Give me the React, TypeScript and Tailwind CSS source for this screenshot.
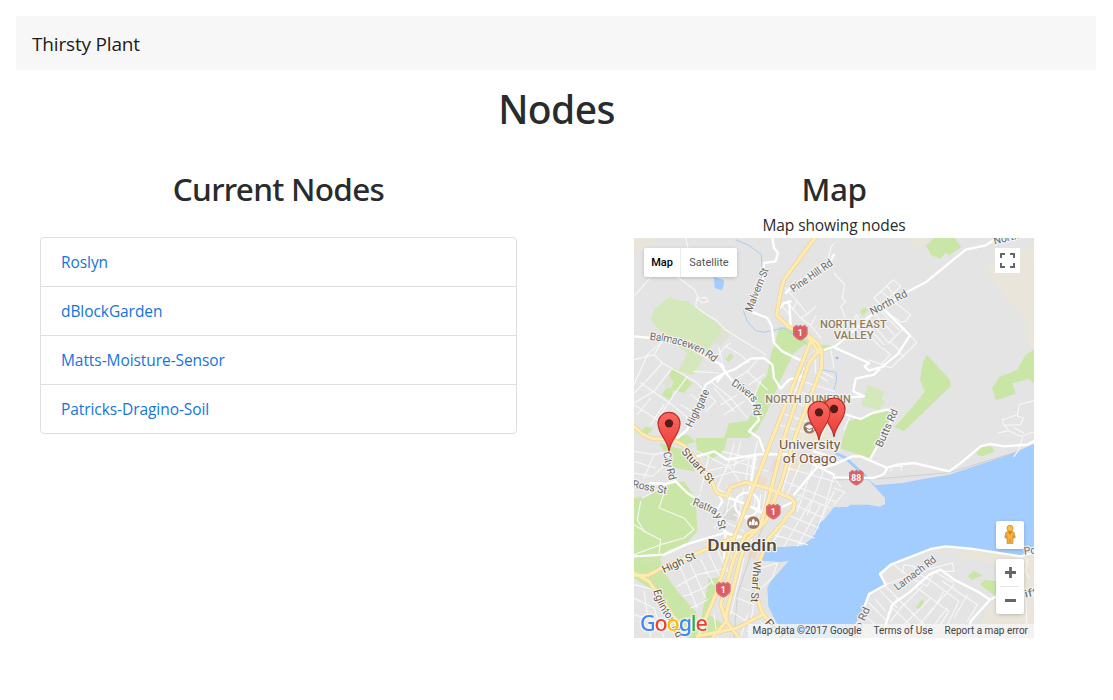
import React from "react";

const nodes = ["Roslyn", "dBlockGarden", "Matts-Moisture-Sensor", "Patricks-Dragino-Soil"];

const palePark = [
  "M50,240 L62,212 L110,174 L118,184 L160,190 L270,272 L238,315 L212,355 L178,412 L132,398 L160,345 L110,308 L62,262 Z",
  "M700,440 L751,461 L743,482 L755,492 L735,517 L682,503 Z",
];
const brightParks = [
  "M118,388 L175,435 L150,465 L118,455 L110,488 L84,470 L96,452 L112,448 L118,430 L104,415 Z",
  "M290,345 L298,356 L284,372 L274,364 Z",
  "M436,265 L470,272 L525,310 L480,345 L440,425 L400,520 L370,575 L345,600 L270,600 L285,556 L340,548 L368,505 L366,450 L400,410 L410,350 L425,310 Z",
  "M545,320 L590,322 L598,335 L560,345 Z",
  "M502,396 L518,400 L512,412 L500,405 Z",
  "M35,565 L58,572 L40,590 L20,582 Z",
  "M900,0 L962,0 L982,27 L945,52 L935,45 L918,62 L890,50 L886,38 L875,24 Z",
  "M690,208 L702,215 L688,234 L678,222 Z",
  "M878,350 L948,425 L951,444 L810,579 L780,568 L825,520 L872,462 L858,425 L868,368 Z",
  "M1200,335 L1200,438 L1185,422 L1135,436 L1145,468 L1085,487 L1074,450 L1095,418 L1150,395 L1175,350 Z",
  "M645,550 L740,518 L768,514 L783,528 L758,576 L713,662 L620,632 L626,600 Z",
  "M1028,642 L1045,622 L1075,626 L1080,642 L1045,655 L1030,652 Z",
  "M185,600 L280,600 L270,640 L230,665 L190,645 Z",
  "M95,600 L160,590 L185,612 L140,625 Z",
  "M0,780 L40,775 L100,740 L150,730 L185,780 L190,880 L150,925 L105,935 L75,965 L0,975 Z",
  "M75,615 L150,635 L185,665 L180,700 L120,690 Z",
  "M0,975 L80,965 L95,1010 L130,1060 L185,1120 L205,1200 L130,1200 L95,1130 L60,1060 L0,1020 Z",
  "M225,1020 L262,1020 L225,1130 L270,1160 L235,1200 L190,1200 Z",
  "M338,887 L360,880 L350,910 L325,910 Z",
  "M1000,1015 L1020,998 L1045,1012 L1015,1026 Z",
  "M1038,1040 L1050,1026 L1090,1030 L1090,1078 Z",
  "M865,1083 L870,1092 L858,1115 L845,1108 Z",
];
const sand = [
  "M0,0 L70,0 L35,30 L0,42 Z",
  "M815,0 L880,0 L880,12 L850,32 Z",
  "M1052,98 L1082,68 L1130,105 L1158,100 L1158,45 L1200,15 L1200,330 L1175,310 L1185,290 L1175,270 L1182,250 Z",
  "M965,938 L1160,958 L1200,950 L1200,1200 L1020,1200 L1068,1100 L1140,1050 L1085,980 L970,955 Z",
];
const buildings = [
  { d: "M420,660 L442,670 L430,708 L408,700 Z", fill: "#ecd9dd" },
  { d: "M375,712 L402,720 L388,750 L366,742 Z", fill: "#ecdccb" },
  { d: "M475,640 L525,650 L490,710 L460,700 Z", fill: "#ebe3cd" },
  { d: "M515,470 L560,480 L590,600 L520,640 L490,600 Z", fill: "#ebe6d8" },
  { d: "M350,930 L372,935 L366,965 L340,960 Z", fill: "#ecd8c4" },
  { d: "M275,805 L320,810 L305,850 L262,840 Z", fill: "#dcdad7" },
  { d: "M84,435 L104,418 L115,430 L100,450 Z", fill: "#e2dfd3" },
  { d: "M270,272 L292,282 L262,322 L238,315 Z", fill: "#e2dfd3" },
];

const water =
  "M1200,618 L1150,640 L1080,665 L945,710 L870,722 L805,735 L725,742 L700,722 L753,780 L753,798 L738,806 L704,800 L650,800 L640,807 L600,808 L570,845 L550,858 L535,900 L505,923 L392,930 L385,968 L440,972 L465,968 L410,1030 L400,1050 L403,1105 L428,1155 L455,1200 L640,1200 L690,1110 L705,1068 L755,1040 L738,1008 L770,980 L890,933 L935,925 L1010,932 L1160,955 L1200,945 Z";

const thinStreets =
  "M155,0 L162,30 M0,175 L50,118 M130,117 L182,155 L192,180 L215,178 L222,190 L205,195 L188,182 L185,205 L210,225 L245,245 L270,272 L310,298 L395,350 " +
  "M85,310 L40,350 L0,440 M0,365 L60,350 L85,375 L185,432 L245,490 L215,520 M60,350 L85,310 M85,375 L45,420 L0,465 M110,395 L60,460 L0,495 M160,415 L120,470 L70,545 M20,435 L120,505 L180,555 M0,500 L70,545 L110,590 M50,480 L10,530 M90,500 L50,560 M170,470 L210,500 M140,500 L190,530 " +
  "M255,405 L180,400 M230,430 L290,480 L340,540 M245,360 L275,325 L320,350 L345,375 M275,325 L290,315 M295,430 L340,400 L400,455 M340,400 L370,365 M390,410 L345,440 M255,330 L265,370 M240,450 L300,520 M260,500 L310,470 M270,530 L330,490 M380,430 L362,470 " +
  "M455,150 L490,190 L520,228 L500,240 L470,205 M490,190 L475,215 M520,228 L545,205 M500,240 L530,262 L560,300 M530,262 L545,235 M445,205 L470,235 L465,262 M580,75 L590,30 L600,15 M540,315 L545,405 L580,430 M560,400 L600,420 M480,420 L520,435 L600,460 M470,450 L570,490 M455,485 L560,520 M440,525 L550,560 M432,560 L520,585 M510,390 L480,470 M590,330 L600,390 " +
  "M600,105 L632,140 L625,180 L635,190 L620,205 L634,240 M720,180 L780,240 L828,295 M720,180 L778,125 L800,145 L745,200 M740,160 L830,230 L815,250 L800,252 L770,230 M760,145 L795,190 M700,240 L765,315 L810,270 M690,255 L750,320 M720,225 L780,290 M735,215 L795,275 M680,265 L740,328 M828,290 L848,315 L770,390 L745,380 L705,365 M745,330 L770,350 L740,380 M765,310 L790,330 L805,355 M660,240 L668,230 L673,240 L660,255 M630,575 L650,530 " +
  "M1200,488 L1155,500 L1150,535 L1168,540 L1160,560 L1110,562 L1105,545 L1150,530 M1092,585 L1125,578 L1110,562 M1125,578 L1160,595 L1200,582 M1140,570 L1170,585 " +
  "M0,640 L60,650 L105,640 L95,680 L55,715 L0,705 M0,670 L65,690 M60,650 L30,720 M0,745 L50,735 M25,780 L80,750 L105,735 M20,790 L10,845 L30,880 L80,905 L75,945 M0,860 L40,885 M90,765 L75,810 L150,840 L180,875 L150,900 L80,920 L0,950 " +
  "M215,700 L300,680 L365,650 M235,720 L300,700 L350,710 M250,750 L290,660 M190,640 L290,690 L320,735 M225,650 L200,760 M300,620 L275,700 M320,610 L300,690 M345,660 L335,730 M290,665 L400,700 M265,640 L370,665 M370,610 L350,700 M200,770 L170,800 M230,740 L280,770 M365,770 L360,810 M320,780 L280,820 L240,870 M330,750 L310,860 M290,765 L275,830 M380,770 L370,870 M340,800 L420,830 M300,830 L390,860 M270,850 L330,880 M395,760 L380,860 " +
  "M480,640 L445,760 M510,650 L460,770 M545,660 L490,820 M575,680 L520,830 M600,710 L560,850 M600,760 L540,890 M460,690 L600,730 M450,730 L600,790 M490,770 L590,810 M480,800 L570,840 M460,830 L555,870 M440,860 L540,900 M420,890 L520,920 M500,770 L410,925 M530,790 L450,925 M560,800 L490,925 " +
  "M130,1045 L190,1010 L280,990 M150,1075 L210,1050 L235,1030 M170,1110 L220,1085 M140,990 L190,1110 M170,980 L215,1080 M200,965 L240,1040 M225,950 L260,1020 M250,935 L280,1000 M270,915 L300,970 M300,960 L280,1050 M330,960 L290,1130 M0,1080 L60,1110 L90,1200 M0,1130 L70,1150 M30,1060 L50,1200 M0,1040 L80,1060 " +
  "M380,990 L430,975 L415,1020 L370,1060 M310,1080 L360,1100 L350,1150 M290,1120 L370,1170 M325,1050 L350,1060 M240,1130 L250,1200 M340,1130 L320,1200 M380,1150 L410,1200 M340,1180 L420,1180 " +
  "M600,750 L632,762 L600,800 M600,720 L620,745 M770,700 L775,685 L805,685 L800,697 M780,980 L835,1025 L880,995 L955,975 L960,1000 L925,1000 M805,1005 L810,980 L840,985 L850,1005 L910,1040 M755,1040 L820,1015 L880,1045 L900,1000 L960,1035 M755,1045 L790,1080 L760,1130 M740,1060 L790,1110 M725,1085 L755,1120 M705,1095 L760,1150 M690,1130 L735,1170 M670,1160 L710,1200 M770,1105 L850,1180 M790,1080 L870,1160 M850,1050 L945,1120 L905,1180 M880,1020 L975,1090 L935,1170 M770,1150 L800,1110 L865,1045 M770,1200 L840,1130 L890,1080 M820,1200 L900,1110 L930,1060 M870,1200 L940,1110 M925,1030 L1030,1100 L1000,1150 M960,1040 L880,1130 M1000,1070 L960,1140 M1180,965 L1175,1000 L1185,1020 M1175,1050 L1180,1200 M1140,655 L1155,635 L1165,600";

const midStreets =
  "M415,0 L420,30 L432,45 L425,70 L390,75 L388,120 L350,220 L400,240 L412,262 L420,315 L445,340 L500,367 " +
  "M0,295 L50,300 L150,320 L240,370 L265,380 L275,405 L310,445 L360,500 L375,545 L345,580 L375,600 L390,640 " +
  "M130,600 L160,575 L215,440 L270,405 L300,395 L350,362 L390,360 L415,380 L420,420 L440,452 L465,425 L500,415 " +
  "M255,375 L280,410 M270,405 L250,430 M455,165 L475,145 L590,68 L600,50 M430,220 L450,195 L470,190 M465,190 L470,260 M560,340 L600,325 " +
  "M1090,0 L1055,22 L995,35 L875,133 L800,172 L700,240 L640,295 L600,328 M740,205 L828,292 L790,350 L745,385 L720,410 L665,422 L658,460 L690,475 L620,480 M600,328 L705,375 L692,385 L705,398 L750,385 " +
  "M630,528 L680,543 L715,525 L760,515 L783,525 L755,580 L710,660 M560,690 L600,680 L655,655 L680,655 L760,690 L750,708 L720,720 L600,718 M755,690 L790,680 L840,675 L945,700 L980,675 L1040,625 L1070,618 L1110,625 L1180,620 L1200,610 " +
  "M105,640 L108,690 L125,730 L160,765 L230,810 L260,835 L272,880 L310,900 M50,735 L95,738 L125,730 M190,655 L240,640 L280,665 L365,650 L400,648 L480,650 M365,650 L345,770 M0,955 L90,950 L155,920 L270,885 M275,885 L350,905 M245,765 L340,800 L410,840 M250,760 L265,790 L240,830 M480,790 L395,830 M555,680 L480,770 M530,675 L600,710 M270,960 L275,885 M540,640 L600,660 M555,607 L575,560 L595,500 " +
  "M690,1110 L705,1068 L755,1040 L738,1008 L770,980 L890,933 L935,925 L1010,932 L1160,955 L1200,943 M748,1200 L755,1160 L775,1100 L830,1060 L885,1010 L920,995 L960,1025 L1030,1060 L1068,1085 L1010,1150 L1000,1200 M1068,1085 L1120,1060 L1200,1070";

const highways =
  "M542,0 L450,125 L440,160 L428,232 L465,268 L520,290 L550,315 L564,340 L562,390 L482,600 L440,740 L395,850 L340,905 L320,960 L277,1125 L277,1150 " +
  "M530,310 L415,600 L298,905 L245,1070 L190,1200 M556,335 L525,375 L450,600 L405,780 L378,865 L335,890 L300,960 L260,1100 L277,1150 L235,1200 M277,1150 L315,1200 M520,290 L555,345 " +
  "M0,565 L28,590 L55,602 L105,602 L150,622 L178,655 L232,725 L248,765 L278,775 L290,748 L335,733 L400,750 L470,780 L482,792 L478,815 L455,838 L450,850 L405,900 L380,960 L370,1000 L368,1075 L385,1125 L425,1175 L430,1200 " +
  "M0,1012 L42,1012 L92,985 L190,945 L300,898 M0,1005 L45,1030 L80,1080 L135,1160 L150,1200 M385,1130 L310,1170 L190,1195";

const pinPath = "M0,0 C-4,-36 -33,-50 -33,-84 A33,33 0 0 1 33,-84 C33,-50 4,-36 0,0 Z";

function Pin({ x, y }: { x: number; y: number }) {
  return (
    <g transform={`translate(${x} ${y})`}>
      <path d={pinPath} fill="url(#pinFill)" stroke="#b5302c" strokeWidth="3.5" />
      <circle cy="-84" r="12.5" fill="#541b18" />
    </g>
  );
}

function Shield({ x, y, n }: { x: number; y: number; n: string }) {
  return (
    <g transform={`translate(${x} ${y})`}>
      <path d="M-20,-15 L-12,-21 L-5,-17 L0,-22 L5,-17 L12,-21 L20,-15 L20,5 Q15,15 0,22 Q-15,15 -20,5 Z" fill="#d95f63" stroke="#dc6f73" strokeWidth="4" />
      <text y="9" textAnchor="middle" fontSize="26" fontWeight="700" fill="#fff">{n}</text>
    </g>
  );
}

type LabelProps = { x: number; y: number; w: number; a?: number; size?: number; color?: string; weight?: number; children: string };

function Label({ x, y, w, a = 0, size = 32, color = "#6b6b6b", weight = 400, children }: LabelProps) {
  return (
    <text
      transform={`translate(${x} ${y}) rotate(${a})`}
      y={size * 0.35}
      textAnchor="middle"
      textLength={w}
      lengthAdjust="spacingAndGlyphs"
      fontSize={size}
      fontWeight={weight}
      fill={color}
      stroke="#f3f3f3"
      strokeWidth="7"
      strokeLinejoin="round"
      paintOrder="stroke"
    >
      {children}
    </text>
  );
}

function PathLabel({ id, d, w, color = "#6b6b6b", children }: { id: string; d: string; w: number; color?: string; children: string }) {
  return (
    <>
      <path id={id} d={d} fill="none" />
      <text fontSize="32" fill={color} stroke="#f3f3f3" strokeWidth="7" strokeLinejoin="round" paintOrder="stroke">
        <textPath href={`#${id}`} textLength={w}>{children}</textPath>
      </text>
    </>
  );
}

function MapCanvas() {
  return (
    <svg viewBox="0 0 1200 1200" className="block h-[400px] w-[400px] font-['Roboto',sans-serif]">
      <defs>
        <linearGradient id="pinFill" x1="0" y1="0" x2="0" y2="1">
          <stop offset="0" stopColor="#fb6a63" />
          <stop offset="1" stopColor="#ea3a35" />
        </linearGradient>
      </defs>
      <rect width="1200" height="1200" fill="#e4e4e4" />
      {sand.map((d) => <path key={d} d={d} fill="#e9e5da" />)}
      {palePark.map((d) => <path key={d} d={d} fill="#d5e8bb" />)}
      {brightParks.map((d) => <path key={d} d={d} fill="#cae6a6" />)}
      {buildings.map((b) => <path key={b.d} d={b.d} fill={b.fill} />)}
      <path d={water} fill="#a3ccff" />
      <path d="M240,117 L268,125 L271,135 L264,157 L242,150 Z" fill="#a3ccff" />
      <path d="M305,5 L345,22 L382,50 L385,110 L355,190 L328,218 L340,250 L365,278 L390,283 L450,270 L520,320 M560,395 L600,402 M605,400 L608,425 L600,455" fill="none" stroke="#a9cdf5" strokeWidth="3" />
      <path d="M605,645 L635,660 L705,725" fill="none" stroke="#a3ccff" strokeWidth="9" />
      <path d="M605,356 L614,358 L612,364 L605,362 Z" fill="#8dbcf7" />
      <path d="M600,726 L740,722 L945,704 L1160,638 M395,850 L350,950 L310,1070 L300,1200" fill="none" stroke="#cfcfcf" strokeWidth="3" />
      <g fill="none" strokeLinejoin="round" strokeLinecap="round">
        <path d={thinStreets} stroke="#f7f7f7" strokeWidth="3.4" />
        <path d={midStreets} stroke="#fff" strokeWidth="7" />
        <circle cx="339" cy="800" r="36" stroke="#fff" strokeWidth="7" />
        <circle cx="339" cy="803" r="10" fill="#fdeaae" stroke="#f2d694" strokeWidth="2" />
        <path d={highways} stroke="#efd291" strokeWidth="13" />
        <path d={highways} stroke="#feebb0" strokeWidth="9" />
      </g>
      <Label x={368} y={155} w={138} a={-68}>Malvern St</Label>
      <Label x={532} y={113} w={146} a={-35}>Pine Hill Rd</Label>
      <Label x={763} y={193} w={122} a={-28}>North Rd</Label>
      <Label x={1138} y={-6} w={122} a={-14}>North Rd</Label>
      <PathLabel id="balmacewen" d="M46,306 Q165,314 236,370 L262,391" w={209}>Balmacewen Rd</PathLabel>
      <PathLabel id="drivers" d="M290,440 Q348,476 354,492 Q360,505 359,562" w={126}>Drivers Rd</PathLabel>
      <Label x={190} y={510} w={122} a={-64}>Highgate</Label>
      <PathLabel id="city" d="M88,643 Q92,680 110,742" w={88}>City Rd</PathLabel>
      <Label x={47} y={747} w={104} a={11}>Ross St</Label>
      <PathLabel id="rattray" d="M174,800 Q213,814 238,828 Q252,845 260,898" w={122}>Rattray St</PathLabel>
      <Label x={193} y={683} w={130} a={48} color="#6b5435">Stuart St</Label>
      <Label x={134} y={973} w={108} a={-25} color="#6b5435">High St</Label>
      <Label x={366} y={1031} w={124} a={94} color="#6b5435">Wharf St</Label>
      <PathLabel id="eglinton" d="M58,1058 Q70,1105 104,1150 Q120,1180 136,1222" w={160} color="#6b5435">Eglinton Rd</PathLabel>
      <Label x={430} y={1180} w={90} a={48} color="#6b5435">Ports</Label>
      <Label x={758} y={570} w={122} a={-66}>Butts Rd</Label>
      <Label x={843} y={1005} w={148} a={-37}>Larnach Rd</Label>
      <Label x={677} y={1156} w={104} a={-66}>ello Rd</Label>
      <Label x={1262} y={928} w={186} a={-7}>Portobello Rd</Label>
      <Label x={1190} y={1064} w={38} a={-12}>ift</Label>
      <Label x={658} y={258} w={200} size={33} color="#8f7f60" weight={500}>NORTH EAST</Label>
      <Label x={659} y={292} w={120} size={33} color="#8f7f60" weight={500}>VALLEY</Label>
      <Label x={522} y={483} w={256} size={33} color="#8f7f60" weight={500}>NORTH DUNEDIN</Label>
      <Label x={527} y={619} w={184} size={41} color="#765a46">University</Label>
      <Label x={527} y={662} w={162} size={41} color="#765a46">of Otago</Label>
      <Label x={324} y={922} w={208} size={51} color="#5c4a35" weight={500}>Dunedin</Label>
      <Shield x={499} y={284} n="1" />
      <Shield x={418} y={821} n="1" />
      <Shield x={268} y={1055} n="1" />
      <Shield x={667} y={719} n="88" />
      <g transform="translate(526 569)">
        <circle r="19" fill="#987560" stroke="#fff" strokeWidth="2" />
        <path d="M-13,-3 L0,-10 L13,-3 L0,4 Z M-7,3 L0,7 L7,3 L7,8 L0,12 L-7,8 Z M11,-2 L13,-2 L13,8 L11,8 Z" fill="#fff" />
      </g>
      <g transform="translate(358 854)">
        <circle r="20" fill="#987560" stroke="#fff" strokeWidth="2" />
        <path d="M-13,8 V-1 L-9,-5 L-5,-1 V8 Z M-4,8 V-8 L0,-12 L4,-8 V8 Z M5,8 V-1 L9,-5 L13,-1 V8 Z" fill="#fff" />
      </g>
      <Pin x={105} y={640} />
      <Pin x={600} y={597} />
      <Pin x={555} y={607} />
    </svg>
  );
}

function GoogleLogo() {
  return (
    <div className="absolute left-[6px] top-[371px] flex text-[21.5px] leading-[28px] font-medium tracking-[-1.1px] [filter:drop-shadow(0_0_1px_white)_drop-shadow(0_0_1px_white)] font-['Noto_Sans',sans-serif]">
      <span className="text-[#4285f4]">G</span>
      <span className="text-[#ea4335]">o</span>
      <span className="text-[#fbbc05]">o</span>
      <span className="text-[#4285f4]">g</span>
      <span className="text-[#34a853]">l</span>
      <span className="text-[#ea4335]">e</span>
    </div>
  );
}

function MapView() {
  return (
    <div className="relative h-[400px] w-[400px] overflow-hidden font-['Roboto',sans-serif]">
      <MapCanvas />
      <GoogleLogo />
      <div className="absolute left-[10px] top-[10px] flex h-[29px] items-center rounded-[2px] bg-white text-[11px] shadow-[0_1px_4px_-1px_rgba(0,0,0,0.3)]">
        <div className="flex h-full w-[37px] items-center justify-center border-r border-[#ececec] pt-px font-medium text-black">Map</div>
        <div className="flex h-full w-[56px] items-center justify-center pt-px text-[#565656]">Satellite</div>
      </div>
      <div className="absolute left-[361px] top-[10px] flex h-[25px] w-[25px] items-center justify-center bg-white">
        <svg viewBox="0 0 15 15" className="h-[15px] w-[15px]" fill="none" stroke="#666" strokeWidth="2">
          <path d="M1,5 V1 H5 M10,1 H14 V5 M14,10 V14 H10 M5,14 H1 V10" />
        </svg>
      </div>
      <div className="absolute left-[362px] top-[283px] flex h-[28px] w-[28px] items-center justify-center rounded-[2px] bg-white shadow-[0_1px_4px_-1px_rgba(0,0,0,0.3)]">
        <svg viewBox="0 0 14 22" className="mb-[2px] h-[21px] w-[14px]">
          <path d="M3,8.5 Q7,6.5 11,8.5 L12.5,14 L11,15 L10.3,12 L10,20.5 H7.5 L7,16 L6.5,20.5 H4 L3.7,12 L3,15 L1.5,14 Z" fill="#f9b233" stroke="#b98a45" strokeWidth=".8" />
          <path d="M5,8 L7,11 L9,8 Z" fill="#e56b25" />
          <circle cx="7" cy="4.5" r="3.2" fill="#fbbd45" stroke="#c08b3a" strokeWidth=".8" />
        </svg>
      </div>
      <div className="absolute left-[362px] top-[321px] flex h-[55px] w-[28px] flex-col items-center rounded-[2px] bg-white shadow-[0_1px_4px_-1px_rgba(0,0,0,0.3)]">
        <svg viewBox="0 0 28 55" className="h-[55px] w-[28px]">
          <path d="M9,13.5 H20 M14.5,8 V19 M9,41.5 H20" stroke="#666" strokeWidth="2.8" />
          <path d="M4,27.5 H23" stroke="#e6e6e6" />
        </svg>
      </div>
      <div className="absolute bottom-0 right-0 flex h-[14px] items-center bg-[#f5f5f5]/80 pl-[5px] pr-[6px] text-[10px] leading-[14px] whitespace-nowrap text-[#444]">
        <span className="w-[121px]">Map data ©2017 Google</span>
        <span className="w-[71px]">Terms of Use</span>
        <span>Report a map error</span>
      </div>
    </div>
  );
}

export default function App() {
  return (
    <div className="h-[700px] overflow-hidden bg-white font-['Open_Sans',sans-serif] text-[#292b2c]">
      <nav className="ml-4 mr-[17px] mt-4 flex h-[54px] items-center bg-[#f7f7f7] px-4">
        <span className="pt-px text-[19px] leading-[30px] tracking-[-0.17px] text-[#1c1c1c]">Thirsty Plant</span>
      </nav>
      <h1 className="mt-[15px] text-center text-[39px] leading-[48px] font-medium tracking-[-0.6px] font-['Noto_Sans',sans-serif]">Nodes</h1>
      <main className="mt-[37px] flex">
        <section className="w-[557px] pl-10 pr-10">
          <h2 className="text-center text-[31.5px] leading-[38px] font-medium tracking-[-0.7px] font-['Noto_Sans',sans-serif]">Current Nodes</h2>
          <ul className="mt-[29px] rounded-[4px] border border-[#dfdfdf]">
            {nodes.map((n) => (
              <li key={n} className="flex h-[49px] items-center border-b border-[#dfdfdf] px-5 last:h-12 last:border-b-0">
                <a className="text-[15.5px] leading-6 tracking-[-0.07px] text-[#1674d9]">{n}</a>
              </li>
            ))}
          </ul>
        </section>
        <section className="flex w-[554px] flex-col items-center">
          <h2 className="text-[31.5px] leading-[38px] font-medium tracking-[-0.5px] font-['Noto_Sans',sans-serif]">Map</h2>
          <p className="mb-px mt-[5px] text-[15.5px] leading-6 tracking-[-0.08px]">Map showing nodes</p>
          <MapView />
        </section>
      </main>
    </div>
  );
}
